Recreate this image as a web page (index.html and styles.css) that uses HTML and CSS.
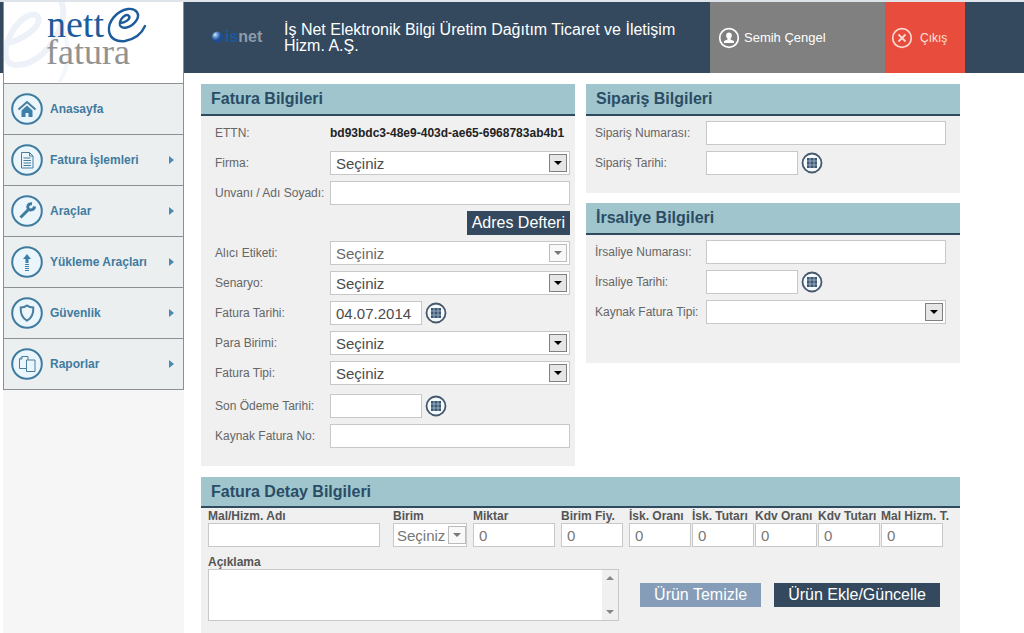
FILE: index.html
```html
<!DOCTYPE html>
<html lang="tr">
<head>
<meta charset="utf-8">
<title>Nette Fatura</title>
<link rel="stylesheet" href="styles.css">
</head>
<body>
<svg width="0" height="0" class="defs" aria-hidden="true">
  <symbol id="calendar" viewBox="0 0 22 22">
    <circle cx="11" cy="11" r="9.5" fill="#f4f9fc" stroke="#45586c" stroke-width="1.8"/>
    <rect x="6" y="6" width="10" height="10" fill="#3c5874"/>
    <path d="M9 6v10M13 6v10M6 9h10M6 13h10" stroke="#a9bccb" stroke-width=".8"/>
  </symbol>
</svg>
<div class="page">
  <aside class="sidebar">
    <a class="brand" href="#" aria-label="Nette Fatura">
      <svg viewBox="0 0 178 80" width="178" height="80">
        <path d="M0 42C20 38 38 24 34 15C30 8 16 16 8 30C-2 48 0 63 12 63C32 64 52 42 58 20C61 10 59 3 56 -3" fill="none" stroke="#edf2f8" stroke-width="6"/>
        <path d="M58 20C65 46 68 62 54 82" fill="none" stroke="#f3f6fa" stroke-width="4"/>
        <text x="43" y="35" class="brand-top">nett</text>
        <text x="42" y="62" class="brand-bottom">fatura</text>
        <path d="M116 21C121 21 127 17 125 14C122 11 115 17 116 23C117 28 127 26 132 19C137 12 132 6 124 7C112 9 104 20 105 29C106 37 113 40 121 39C131 37 138 31 141 24" fill="none" stroke="#1d5c9b" stroke-width="2.4" stroke-linecap="round"/>
      </svg>
    </a>
    <nav class="menu">
      <a href="#" class="menu-item">
        <svg class="menu-icon" viewBox="0 0 32 32"><circle cx="16" cy="16" r="14.8"/><path class="line bold" d="M7.500 16.500 16 9l8.500 7.500"/><path class="solid" d="M10.500 17.500 16 12.500l5.500 5v6.500h-4v-4h-3v4h-4z"/></svg>
        <span>Anasayfa</span></a>
      <a href="#" class="menu-item has-sub">
        <svg class="menu-icon" viewBox="0 0 32 32"><circle cx="16" cy="16" r="14.800"/><path class="line" d="M10.500 8.500h8l3.500 3.500v12h-11.500zM18.500 8.500v3.500h3.500M12.500 14h7M12.500 16.500h7.500M12.500 19h7.500M12.500 21.500h7.500"/></svg>
        <span>Fatura İşlemleri</span></a>
      <a href="#" class="menu-item has-sub">
        <svg class="menu-icon" viewBox="0 0 32 32"><circle cx="16" cy="16" r="14.800"/><path class="thick" d="M9.500 22.500 18 14"/><path class="thick" d="M21 8.700c-4-.4-5 3-3.700 5.200 2 2 6 1 6.200-2.600"/></svg>
        <span>Araçlar</span></a>
      <a href="#" class="menu-item has-sub">
        <svg class="menu-icon" viewBox="0 0 32 32"><circle cx="16" cy="16" r="14.800"/><path class="solid" d="M16 8l4 5h-2.500v4h-3v-4H12zM14 18h4v1h-4zM14 20h4v1h-4zM14 22h4v1h-4zM14 24h4v1h-4z"/></svg>
        <span>Yükleme Araçları</span></a>
      <a href="#" class="menu-item has-sub">
        <svg class="menu-icon" viewBox="0 0 32 32"><circle cx="16" cy="16" r="14.800"/><path class="line bold" d="M16 8.500c2 1.600 4 2 6.300 2 .3 6-1.500 10.500-6.300 13.200-4.800-2.700-6.600-7.200-6.300-13.200 2.300 0 4.300-.4 6.300-2z"/></svg>
        <span>Güvenlik</span></a>
      <a href="#" class="menu-item has-sub">
        <svg class="menu-icon" viewBox="0 0 32 32"><circle cx="16" cy="16" r="14.800"/><path class="line" d="M15.500 20.500h-7V11l2.500-2.500h6v3.500M8.500 11h2.500V8.500M15.500 12h8.500v11.500h-8.500z"/></svg>
        <span>Raporlar</span></a>
    </nav>
  </aside>

  <div class="main">
    <header class="topbar">
      <svg class="isnet" viewBox="0 0 58 24" width="58" height="24" role="img" aria-label="isnet">
        <defs><radialGradient id="ball" cx=".3" cy=".3"><stop offset="0" stop-color="#d5e5f8"/><stop offset=".5" stop-color="#5f8fce"/><stop offset="1" stop-color="#1d4e94"/></radialGradient></defs>
        <circle cx="6.500" cy="11" r="5.500" fill="url(#ball)"/>
        <text x="14" y="16" class="isnet-text"><tspan fill="#1a58a0">is</tspan><tspan fill="#8f9ba9">net</tspan></text>
      </svg>
      <h1 class="company">İş Net Elektronik Bilgi Üretim Dağıtım Ticaret ve İletişim Hizm. A.Ş.</h1>
      <a href="#" class="user">
        <svg viewBox="0 0 22 22" width="22" height="22"><circle cx="11" cy="11" r="9.300" fill="none" stroke="#fff" stroke-width="1.700"/><path d="M11 5.500c3.500 0 3.500 4.500 1.500 6v1l3.500 1.500v2H6v-2l3.500-1.500v-1c-2-1.500-2-6 1.500-6z" fill="#fff"/></svg>
        <span>Semih Çengel</span></a>
      <a href="#" class="exit">
        <svg viewBox="0 0 22 22" width="22" height="22"><circle cx="11" cy="11" r="9.300" fill="none" stroke="#fbd9d2" stroke-width="1.700"/><path d="M7.500 7.500l7 7M14.500 7.500l-7 7" stroke="#fbd9d2" stroke-width="1.800"/></svg>
        <span>Çıkış</span></a>
    </header>

    <form class="content">
      <section class="panel invoice">
        <h2>Fatura Bilgileri</h2>
        <div class="rows">
          <div class="row"><span class="label">ETTN:</span><strong class="ettn">bd93bdc3-48e9-403d-ae65-6968783ab4b1</strong></div>
          <div class="row"><label for="firma">Firma:</label><select id="firma"><option>Seçiniz</option></select></div>
          <div class="row"><label for="unvan">Unvanı / Adı Soyadı:</label><input id="unvan" type="text"></div>
          <div class="row end"><button type="button" class="btn compact">Adres Defteri</button></div>
          <div class="row"><label for="etiket">Alıcı Etiketi:</label><select id="etiket" disabled><option>Seçiniz</option></select></div>
          <div class="row"><label for="senaryo">Senaryo:</label><select id="senaryo"><option>Seçiniz</option></select></div>
          <div class="row"><label for="ftarih">Fatura Tarihi:</label><input id="ftarih" type="text" class="date" value="04.07.2014"><button type="button" class="cal" aria-label="Takvim"><svg><use href="#calendar"/></svg></button></div>
          <div class="row"><label for="para">Para Birimi:</label><select id="para"><option>Seçiniz</option></select></div>
          <div class="row"><label for="tip">Fatura Tipi:</label><select id="tip"><option>Seçiniz</option></select></div>
          <div class="row spaced"><label for="odeme">Son Ödeme Tarihi:</label><input id="odeme" type="text" class="date"><button type="button" class="cal" aria-label="Takvim"><svg><use href="#calendar"/></svg></button></div>
          <div class="row"><label for="kaynak">Kaynak Fatura No:</label><input id="kaynak" type="text"></div>
        </div>
      </section>

      <div class="side">
        <section class="panel">
          <h2>Sipariş Bilgileri</h2>
          <div class="rows">
            <div class="row"><label for="sno">Sipariş Numarası:</label><input id="sno" type="text"></div>
            <div class="row"><label for="starih">Sipariş Tarihi:</label><input id="starih" type="text" class="date"><button type="button" class="cal" aria-label="Takvim"><svg><use href="#calendar"/></svg></button></div>
          </div>
        </section>
        <section class="panel waybill">
          <h2>İrsaliye Bilgileri</h2>
          <div class="rows">
            <div class="row"><label for="ino">İrsaliye Numarası:</label><input id="ino" type="text"></div>
            <div class="row"><label for="itarih">İrsaliye Tarihi:</label><input id="itarih" type="text" class="date"><button type="button" class="cal" aria-label="Takvim"><svg><use href="#calendar"/></svg></button></div>
            <div class="row"><label for="ktip">Kaynak Fatura Tipi:</label><select id="ktip"><option></option></select></div>
          </div>
        </section>
      </div>

      <section class="panel detail">
        <h2>Fatura Detay Bilgileri</h2>
        <div class="detail-body">
          <div class="line-item">
            <div class="field product"><label for="mal">Mal/Hizm. Adı</label><input id="mal" type="text"></div>
            <div class="field"><label for="birim">Birim</label><select id="birim" disabled><option>Seçiniz</option></select></div>
            <div class="field"><label for="miktar">Miktar</label><input id="miktar" type="text" value="0"></div>
            <div class="field"><label for="fiyat">Birim Fiy.</label><input id="fiyat" type="text" value="0"></div>
            <div class="amounts">
              <div class="field"><label for="isko">İsk. Oranı</label><input id="isko" type="text" value="0"></div>
              <div class="field"><label for="iskt">İsk. Tutarı</label><input id="iskt" type="text" value="0"></div>
              <div class="field"><label for="kdvo">Kdv Oranı</label><input id="kdvo" type="text" value="0"></div>
              <div class="field"><label for="kdvt">Kdv Tutarı</label><input id="kdvt" type="text" value="0"></div>
              <div class="field"><label for="malt">Mal Hizm. T.</label><input id="malt" type="text" value="0"></div>
            </div>
          </div>
          <div class="note-row">
            <div class="field note"><label for="aciklama">Açıklama</label><textarea id="aciklama"></textarea></div>
            <div class="actions">
              <button type="button" class="btn muted">Ürün Temizle</button>
              <button type="button" class="btn">Ürün Ekle/Güncelle</button>
            </div>
          </div>
        </div>
      </section>
    </form>
  </div>
</div>
</body>
</html>
```
FILE: styles.css
```css
* { box-sizing: border-box; }
body {
  margin: 0;
  background: #fff;
  font-family: "Liberation Sans", Arial, sans-serif;
  font-size: 12px;
  color: #666;
}
a { text-decoration: none; color: inherit; }
.defs { position: absolute; }
.page {
  display: flex;
  min-height: 100vh;
  border-top: 2px solid #dfe4ea;
  padding-left: 3px;
  background: linear-gradient(#34495e, #34495e) 0 0 / 100% 71px no-repeat;
}

/* Sidebar */
.sidebar { flex: 0 0 181px; background: #f6f6f6; }
.brand {
  display: block;
  height: 81px;
  overflow: hidden;
  background: #fff;
  border: 1px solid #8c9094;
  border-width: 0 1px;
}
.brand svg { display: block; }
.brand-top { font: 38px "Liberation Serif", serif; fill: #1d5c9b; }
.brand-bottom { font: 36px "Liberation Serif", serif; fill: #929292; }
.menu { border: 1px solid #8c9094; }
.menu-item {
  display: flex;
  align-items: center;
  gap: 7px;
  height: 51px;
  padding: 0 9px 0 7px;
  background: #eceff0;
  border-bottom: 1px solid #8c9094;
  color: #3f7ba0;
  font-weight: bold;
}
.menu-item:last-child { height: 50px; border-bottom: 0; }
.menu-icon { width: 32px; height: 32px; }
.menu-icon circle { fill: #eaf6fc; stroke: #3f7ba0; stroke-width: 2; }
.menu-icon .line { fill: none; stroke: #4a7c9c; stroke-width: 1; }
.menu-icon .bold { stroke-width: 2; }
.menu-icon .thick { fill: none; stroke: #3f7ba0; stroke-width: 3; }
.menu-icon .solid { fill: #3d80a9; }
.has-sub::after {
  content: "";
  margin-left: auto;
  border: 4px solid transparent;
  border-left: 5px solid #4a8ab0;
  border-right: 0;
}

/* Top bar */
.main { flex: 1; min-width: 0; display: flex; flex-direction: column; }
.topbar {
  display: flex;
  align-items: center;
  height: 71px;
  padding: 0 59px 0 27px;
  color: #fff;
}
.isnet { flex: none; margin-right: 15px; overflow: visible; }
.isnet-text { font: bold 16px "Liberation Sans", sans-serif; }
.company {
  flex: 1;
  margin: 0;
  padding-right: 24px;
  font-size: 16px;
  line-height: 16px;
  font-weight: normal;
}
.user, .exit { display: flex; align-items: center; align-self: stretch; }
.user { width: 175px; padding-left: 8px; gap: 4px; background: #808080; font-size: 13px; }
.exit { width: 80px; padding-left: 6px; gap: 7px; background: #e74c3c; color: #fde3dd; }

/* Panels */
.content {
  flex: 1;
  display: grid;
  grid-template-columns: 1fr 1fr;
  grid-template-rows: auto 1fr;
  gap: 11px;
  padding: 11px 64px 0 17px;
}
.side { display: flex; flex-direction: column; gap: 10px; }
.panel { background: #f0f0f0; }
.panel h2 {
  margin: 0;
  height: 32px;
  padding-left: 10px;
  font-size: 16px;
  line-height: 30px;
  color: #2a4d66;
  background: #a0c5cd;
  border-bottom: 2px solid #2f4a5c;
}
.rows { padding: 2px 14px 15px 9px; }
.invoice .rows { padding: 2px 5px 15px 14px; }
.waybill { min-height: 160px; }
.row { display: flex; align-items: center; height: 30px; }
.row label, .label { flex: 0 0 111px; }
.invoice .row label, .invoice .label { flex-basis: 115px; }
.row.end { justify-content: flex-end; }
.row.spaced { margin-top: 3px; }
.ettn { color: #222; }

input, select, textarea {
  flex: 1;
  min-width: 0;
  width: 100%;
  height: 24px;
  margin: 0;
  padding: 0 5px;
  border: 1px solid #c8c8c8;
  border-radius: 0;
  background: #fff;
  font: 15px "Liberation Sans", Arial, sans-serif;
  color: #4c4c4c;
}
select {
  appearance: none;
  background: #fff url("data:image/svg+xml,%3Csvg xmlns='http://www.w3.org/2000/svg' width='18' height='18'%3E%3Crect x='.5' y='.5' width='17' height='17' fill='%23e6e6e6' stroke='%23808080'/%3E%3Cpath d='M5 7h8l-4 4z' fill='%23000'/%3E%3C/svg%3E") right 2px center no-repeat;
}
select:disabled {
  color: #6a6a6a;
  opacity: 1;
  background-image: url("data:image/svg+xml,%3Csvg xmlns='http://www.w3.org/2000/svg' width='18' height='18'%3E%3Crect x='.5' y='.5' width='17' height='17' fill='%23f8f8f8' stroke='%23bcbcbc'/%3E%3Cpath d='M5 7h8l-4 4z' fill='%23777'/%3E%3C/svg%3E");
}
.date { flex: 0 0 92px; }
.cal { margin: 0 0 0 3px; padding: 0; border: 0; background: none; }
.cal svg { display: block; width: 22px; height: 22px; }
.btn {
  height: 24px;
  padding: 0 14px;
  border: 0;
  background: #34495e;
  color: #fff;
  font: 16px "Liberation Sans", Arial, sans-serif;
  white-space: nowrap;
}
.btn.compact { padding: 0 5px; }
.btn.muted { background: #859db8; }

/* Detail panel */
.detail { grid-column: 1 / -1; }
.detail h2 { height: 31px; line-height: 29px; }
.detail-body { padding: 1px 17px 12px 7px; }
.line-item {
  display: grid;
  grid-template-columns: minmax(0, 1fr) 74px 82px 62px auto;
  column-gap: 6px;
}
.product { margin-right: 7px; }
.amounts { display: grid; grid-template-columns: repeat(5, 62px); column-gap: 1px; }
.field { min-width: 0; }
.field label {
  display: block;
  height: 14px;
  line-height: 14px;
  font-weight: bold;
  color: #555;
  white-space: nowrap;
}
.field input, .field select { display: block; color: #777; }
.field select { padding: 0 3px; background-position: right 0 center; }
.note-row { display: flex; align-items: flex-end; gap: 21px; margin-top: 8px; }
.note { flex: 1; }
.field textarea {
  display: block;
  height: 52px;
  padding-right: 20px;
  resize: none;
  background:
    url("data:image/svg+xml,%3Csvg xmlns='http://www.w3.org/2000/svg' width='16' height='16'%3E%3Cpath d='M4 10h8L8 6z' fill='%23888'/%3E%3C/svg%3E") right top no-repeat,
    url("data:image/svg+xml,%3Csvg xmlns='http://www.w3.org/2000/svg' width='16' height='16'%3E%3Cpath d='M4 6h8l-4 4z' fill='%23888'/%3E%3C/svg%3E") right bottom no-repeat,
    linear-gradient(#f0f0f0, #f0f0f0) right top / 16px 100% no-repeat,
    #fff;
}
.actions { display: flex; gap: 13px; padding: 0 3px 14px 0; }
```
